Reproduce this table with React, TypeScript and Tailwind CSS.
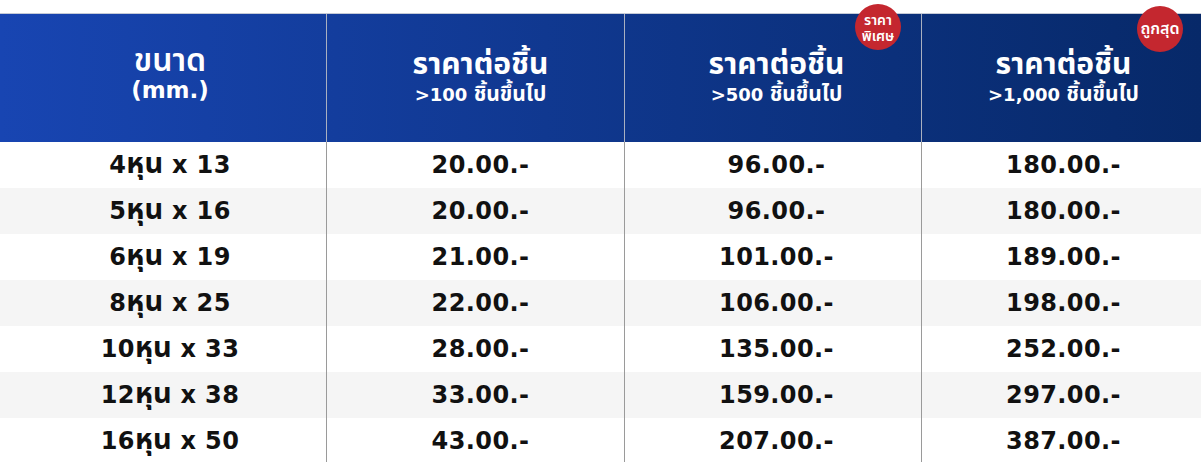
import React from "react";

const rows = [
  ["4หุน x 13", "20.00.-", "96.00.-", "180.00.-"],
  ["5หุน x 16", "20.00.-", "96.00.-", "180.00.-"],
  ["6หุน x 19", "21.00.-", "101.00.-", "189.00.-"],
  ["8หุน x 25", "22.00.-", "106.00.-", "198.00.-"],
  ["10หุน x 33", "28.00.-", "135.00.-", "252.00.-"],
  ["12หุน x 38", "33.00.-", "159.00.-", "297.00.-"],
  ["16หุน x 50", "43.00.-", "207.00.-", "387.00.-"],
];

const font = { fontFamily: '"DejaVu Sans", "Noto Sans", "Noto Sans Thai", sans-serif' };
const pads = ["pl-[14px]", "pl-[10px]", "pl-[7px]", "pl-[4px]"];

function T({ text, cls }: { text: string; cls: string }) {
  const parts = text.split(/([\u0E00-\u0E7F]+)/);
  return (
    <span className="whitespace-pre">
      {parts.map((p, i) =>
        /[\u0E00-\u0E7F]/.test(p) ? (
          <span key={i} className={cls}>
            {p}
          </span>
        ) : (
          <React.Fragment key={i}>{p}</React.Fragment>
        )
      )}
    </span>
  );
}

export default function App() {
  return (
    <div className="w-[1201px] h-[462px] overflow-hidden bg-white pt-[13px]" style={font}>
      <div className="grid grid-cols-[326px_298px_297px_1fr] h-[129px] border-t border-[#c5cad6] bg-gradient-to-r from-[#1845b2] to-[#072969] text-white">
        <div className="flex flex-col items-center justify-center pb-[8px] pl-[14px]">
          <div className="text-[32px] font-semibold leading-[32px]">ขนาด</div>
          <div className="text-[23px] font-bold leading-[28px]">(mm.)</div>
        </div>
        {[
          [">100 ", "ชิ้นขึ้นไป", null],
          [">500 ", "ชิ้นขึ้นไป", "special"],
          [">1,000 ", "ชิ้นขึ้นไป", "cheap"],
        ].map(([a, b, badge], k) => (
          <div key={k} className={`relative flex flex-col items-center justify-center border-l border-[#a9b0c0] pb-[2px] ${pads[k + 1]}`}>
            <div className="text-[30px] font-bold leading-[36px]">ราคาต่อชิ้น</div>
            <div className="text-[18px] font-bold leading-[26px] whitespace-pre">
              {a}
              <span className="text-[21px] leading-none">{b}</span>
            </div>
            {badge === "special" && (
              <div className="absolute right-[20px] top-[-10px] w-[46px] h-[46px] rounded-full bg-[#c4272f] flex flex-col items-center justify-center text-[14px] leading-[16px] font-semibold pt-[2px]">
                <span>ราคา</span>
                <span>พิเศษ</span>
              </div>
            )}
            {badge === "cheap" && (
              <div className="absolute right-[18px] top-[-8px] w-[46px] h-[46px] rounded-full bg-[#c4272f] flex items-center justify-center text-[16px] font-semibold">
                ถูกสุด
              </div>
            )}
          </div>
        ))}
      </div>
      {rows.map((r, i) => (
        <div
          key={i}
          className={`grid grid-cols-[326px_298px_297px_1fr] h-[46px] text-[24px] tracking-[0.4px] font-bold text-[#111] ${i % 2 === 1 ? "bg-[#f5f5f5]" : "bg-white"}`}
        >
          {r.map((c, j) => (
            <div key={j} className={`flex items-center justify-center ${pads[j]} ${j > 0 ? "border-l border-[#9a9a9a]" : ""}`}>
              <T text={c} cls="text-[29px] leading-none tracking-normal" />
            </div>
          ))}
        </div>
      ))}
    </div>
  );
}
